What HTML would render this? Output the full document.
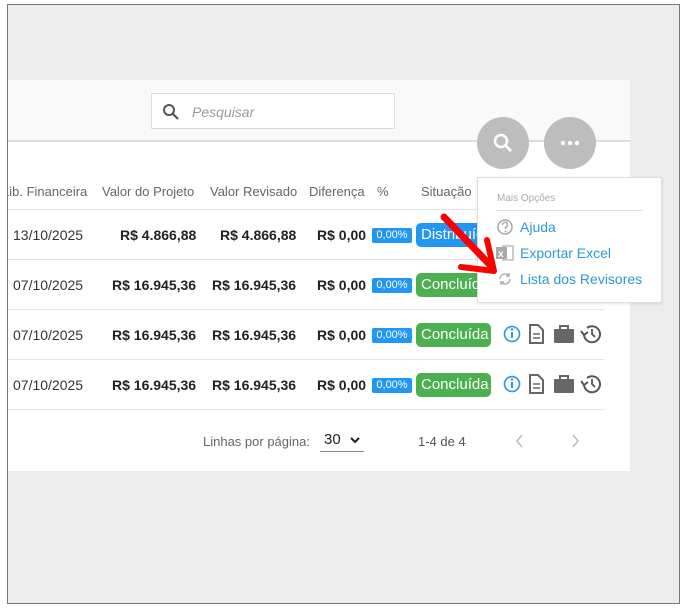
<!DOCTYPE html>
<html><head><meta charset="utf-8"><style>
*{margin:0;padding:0;box-sizing:border-box}
body{width:685px;height:608px;background:#fff;font-family:"Liberation Sans","DejaVu Sans",sans-serif;position:relative;overflow:hidden}
.frame{position:absolute;left:7px;top:4px;width:673px;height:600px;border:1px solid #777;background:#ececec}
.abs{position:absolute}
.panel{left:8px;top:80px;width:622px;height:391px;background:#fff}
.head{left:8px;top:80px;width:622px;height:62px;background:#f9f9f9;border-bottom:2px solid #ddd}
.search{left:151px;top:93px;width:244px;height:36px;background:#fff;border:1px solid #ddd}
.search span{position:absolute;left:40px;top:10px;font-size:14px;font-style:italic;color:#999}
.th{top:184px;font-size:13px;color:#666;white-space:nowrap}
.td{font-size:14px;color:#333;white-space:nowrap}
.b{font-weight:bold;color:#222}
.line{height:1px;background:#e6e6e6;left:8px;width:597px}
.pct{background:#2196f3;color:#fff;font-size:11px;width:40px;height:15px;line-height:15px;text-align:center;border-radius:2px}
.st{color:#fff;font-size:15px;height:24px;line-height:24px;padding:0 5px;border-radius:5px;width:75px;white-space:nowrap;overflow:hidden}
.circ{width:52px;height:52px;border-radius:50%;background:#bdbdbd}
.menu{left:477px;top:177px;width:185px;height:126px;background:#fff;border:1px solid #ddd;box-shadow:0 1px 3px rgba(0,0,0,.1)}
.mi{position:absolute;left:42px;font-size:14px;color:#2a9ad8;white-space:nowrap}
</style></head><body>
<div class="frame"></div>
<div class="abs panel"></div>
<div class="abs head"></div>
<div class="abs search"><svg class="abs" style="left:10px;top:9px" width="18" height="18" viewBox="0 0 18 18"><circle cx="7" cy="7" r="5" fill="none" stroke="#555" stroke-width="2"/><path d="M11 11l5 5" stroke="#555" stroke-width="2.2"/></svg><span>Pesquisar</span></div>

<div class="abs" style="left:8px;top:180px;width:90px;height:20px;overflow:hidden"><div class="abs th" style="left:-6px;top:4px">Lib. Financeira</div></div>
<div class="abs th" style="left:102px">Valor do Projeto</div>
<div class="abs th" style="left:210px">Valor Revisado</div>
<div class="abs th" style="left:309px">Diferença</div>
<div class="abs th" style="left:377px">%</div>
<div class="abs th" style="left:421px">Situação</div>

<div class="abs line" style="top:209px"></div>
<div class="abs line" style="top:259px"></div>
<div class="abs line" style="top:309px"></div>
<div class="abs line" style="top:359px"></div>
<div class="abs line" style="top:409px"></div>

<div class="abs td" style="left:13px;top:227px">13/10/2025</div>
<div class="abs td b" style="left:120px;top:227px">R$ 4.866,88</div>
<div class="abs td b" style="left:220px;top:227px">R$ 4.866,88</div>
<div class="abs td b" style="left:317px;top:227px">R$ 0,00</div>
<div class="abs pct" style="left:372px;top:228px">0,00%</div>
<div class="abs st" style="left:416px;top:223px;background:#2196f3">Distribuído</div>

<div class="abs td" style="left:13px;top:277px">07/10/2025</div>
<div class="abs td b" style="left:112px;top:277px">R$ 16.945,36</div>
<div class="abs td b" style="left:212px;top:277px">R$ 16.945,36</div>
<div class="abs td b" style="left:317px;top:277px">R$ 0,00</div>
<div class="abs pct" style="left:372px;top:278px">0,00%</div>
<div class="abs st" style="left:416px;top:273px;background:#4caf50">Concluída</div>

<div class="abs td" style="left:13px;top:327px">07/10/2025</div>
<div class="abs td b" style="left:112px;top:327px">R$ 16.945,36</div>
<div class="abs td b" style="left:212px;top:327px">R$ 16.945,36</div>
<div class="abs td b" style="left:317px;top:327px">R$ 0,00</div>
<div class="abs pct" style="left:372px;top:328px">0,00%</div>
<div class="abs st" style="left:416px;top:323px;background:#4caf50">Concluída</div>

<div class="abs td" style="left:13px;top:377px">07/10/2025</div>
<div class="abs td b" style="left:112px;top:377px">R$ 16.945,36</div>
<div class="abs td b" style="left:212px;top:377px">R$ 16.945,36</div>
<div class="abs td b" style="left:317px;top:377px">R$ 0,00</div>
<div class="abs pct" style="left:372px;top:378px">0,00%</div>
<div class="abs st" style="left:416px;top:373px;background:#4caf50">Concluída</div>

<svg class="abs" style="left:500px;top:320px" width="105" height="80" viewBox="0 0 105 80">
<g id="ic">
<circle cx="12" cy="14" r="7.5" fill="none" stroke="#2196f3" stroke-width="1.6"/><rect x="11" y="12" width="2" height="6" fill="#2196f3"/><circle cx="12" cy="9.5" r="1.2" fill="#2196f3"/>
<path d="M30 5h8l5 5v13h-13z" fill="none" stroke="#666" stroke-width="2"/><path d="M33 14h7M33 18h7" stroke="#666" stroke-width="1.6"/>
<rect x="54" y="9" width="20" height="14" rx="1" fill="#666"/><path d="M60 9V6h8v3" fill="none" stroke="#666" stroke-width="2"/>
<path d="M84 14a8 8 0 1 0 3-6" fill="none" stroke="#555" stroke-width="2"/><path d="M81 11l3 4 4-3" fill="none" stroke="#555" stroke-width="2"/><path d="M92 9v5l3 3" fill="none" stroke="#555" stroke-width="1.8"/>
</g>
<use href="#ic" y="50"/>
</svg>

<div class="abs" style="left:203px;top:434px;font-size:13px;color:#666">Linhas por página:</div>
<div class="abs" style="left:320px;top:431px;width:44px;height:21px;border-bottom:1px solid #888;font-size:15px;color:#222;padding-left:4px">30<svg class="abs" style="left:30px;top:5px" width="10" height="8"><path d="M1 2l4 4 4-4" fill="none" stroke="#222" stroke-width="2"/></svg></div>
<div class="abs" style="left:418px;top:434px;font-size:13px;color:#555">1-4 de 4</div>
<svg class="abs" style="left:515px;top:433px" width="70" height="16"><path d="M7 2l-5 6 5 6" fill="none" stroke="#bbb" stroke-width="1.5"/><path d="M58 2l5 6-5 6" fill="none" stroke="#bbb" stroke-width="1.5"/></svg>

<div class="abs circ" style="left:477px;top:117px"><svg class="abs" style="left:14px;top:14px" width="24" height="24"><circle cx="10" cy="10" r="6" fill="none" stroke="#fff" stroke-width="2.5"/><path d="M14 14l6 6" stroke="#fff" stroke-width="2.8"/></svg></div>
<div class="abs circ" style="left:544px;top:117px"><svg class="abs" style="left:16px;top:22px" width="20" height="8"><circle cx="3" cy="4" r="2.2" fill="#fff"/><circle cx="10" cy="4" r="2.2" fill="#fff"/><circle cx="17" cy="4" r="2.2" fill="#fff"/></svg></div>

<div class="abs menu">
<div class="abs" style="left:19px;top:15px;font-size:10px;color:#aaa;white-space:nowrap">Mais Opções</div>
<div class="abs" style="left:18px;top:32px;width:147px;height:1px;background:#ddd"></div>
<svg class="abs" style="left:18px;top:40px" width="18" height="18"><circle cx="9" cy="9" r="7" fill="none" stroke="#aaa" stroke-width="1.6"/><path d="M6.5 7a2.5 2.5 0 1 1 3 2.3v1.7" fill="none" stroke="#aaa" stroke-width="1.6"/><circle cx="9.5" cy="13.5" r="1" fill="#aaa"/></svg>
<div class="mi" style="top:41px">Ajuda</div>
<svg class="abs" style="left:18px;top:67px" width="18" height="16"><rect x="7" y="1" width="10" height="14" fill="none" stroke="#aaa" stroke-width="1.2"/><rect x="0" y="2" width="11" height="12" fill="#aaa"/><text x="2" y="12" font-size="10" fill="#fff" font-family="Liberation Sans" font-weight="bold">x</text></svg>
<div class="mi" style="top:67px">Exportar Excel</div>
<svg class="abs" style="left:19px;top:93px" width="16" height="16"><path d="M3 8a5 5 0 0 1 9-3M13 8a5 5 0 0 1-9 3" fill="none" stroke="#aaa" stroke-width="1.4"/><path d="M12 2v3h-3M4 14v-3h3" fill="none" stroke="#aaa" stroke-width="1.4"/></svg>
<div class="mi" style="top:93px">Lista dos Revisores</div>
</div>

<svg class="abs" style="left:430px;top:205px" width="80" height="80"><path d="M14 12L62 62" stroke="#f00" stroke-width="7" stroke-linecap="round"/><path d="M31 62L64 66 57 35" fill="none" stroke="#f00" stroke-width="6" stroke-linecap="round" stroke-linejoin="round"/></svg>
</body></html>
